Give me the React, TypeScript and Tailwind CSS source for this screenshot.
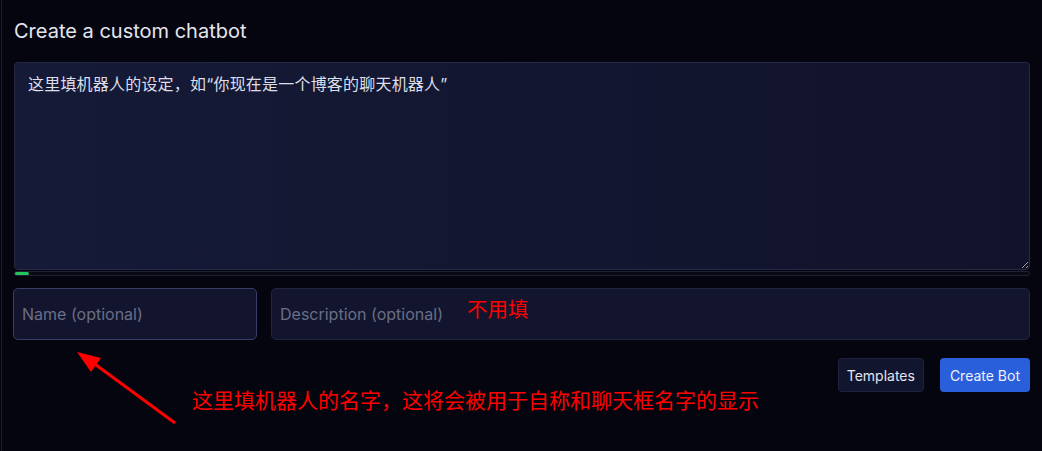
import React from "react";

const SANS = "font-['Inter','Noto_Sans_CJK_SC',sans-serif]";

function Annotations() {
  return (
    <>
      <span className="pointer-events-none absolute left-[467px] top-[294px] font-['Noto_Sans_CJK_SC',sans-serif] text-[20.5px] leading-[28px] text-[#ff0000]">
        不用填
      </span>
      <span className="pointer-events-none absolute left-[192px] top-[385px] font-['Noto_Sans_CJK_SC',sans-serif] text-[21px] leading-[28px] text-[#ff0000]">
        这里填机器人的名字，这将会被用于自称和聊天框名字的显示
      </span>
      <svg
        className="pointer-events-none absolute left-0 top-0"
        width={1042}
        height={451}
        viewBox="0 0 1042 451"
      >
        <line x1={175} y1={423} x2={92} y2={362} stroke="#ff0000" strokeWidth={3} />
        <polygon points="77,352 101,358 91,372" fill="#ff0000" />
      </svg>
    </>
  );
}

export default function App() {
  return (
    <div className={`relative h-[451px] w-[1042px] overflow-hidden bg-[#04050f] ${SANS}`}>
      <div className="ml-[1px] h-full border-l border-[#1b1e30] pl-[12px] pr-[12px] pt-[18px]">
        <h2 className="text-[20px] leading-[26px] text-[#e4e6ee]">Create a custom chatbot</h2>

        {/* System prompt */}
        <textarea
          className="mt-[18px] block h-[208px] w-full resize-y rounded-[4px] border border-[#252943] bg-gradient-to-r from-[#151a37] to-[#11132a] px-[13px] py-[9px] text-[16px] leading-[24px] tracking-[0.2px] text-[#dcdeea] outline-none"
          defaultValue="这里填机器人的设定，如“你现在是一个博客的聊天机器人”"
        />
        <div className="mt-[1px] h-[5px] w-full rounded-full border border-[#1e2236] bg-[#070914]">
          <div className="h-full w-[14px] rounded-full bg-[#22c55e]" />
        </div>

        {/* Name / description */}
        <div className="mt-[12px] flex gap-[14px]">
          <input
            className="-ml-[1px] h-[52px] w-[244px] rounded-[5px] border border-[#393d66] bg-[#12152d] px-[8px] text-[16px] text-[#dcdeea] outline-none placeholder:text-[#6a6e86]"
            placeholder="Name (optional)"
          />
          <input
            className="h-[52px] flex-1 rounded-[5px] border border-[#22263c] bg-[#12152d] px-[8px] text-[16px] text-[#dcdeea] outline-none placeholder:text-[#6a6e86]"
            placeholder="Description (optional)"
          />
        </div>

        {/* Actions */}
        <div className="mt-[18px] flex justify-end gap-[16px]">
          <button className="h-[34px] rounded-[4px] border border-[#1f2340] bg-[#12152e] px-[8px] text-[14px] text-[#e4e6ee]">
            Templates
          </button>
          <button className="h-[34px] rounded-[4px] bg-[#2a5fdb] px-[10px] text-[14px] text-[#eef1fb]">
            Create Bot
          </button>
        </div>
      </div>
      <Annotations />
    </div>
  );
}
